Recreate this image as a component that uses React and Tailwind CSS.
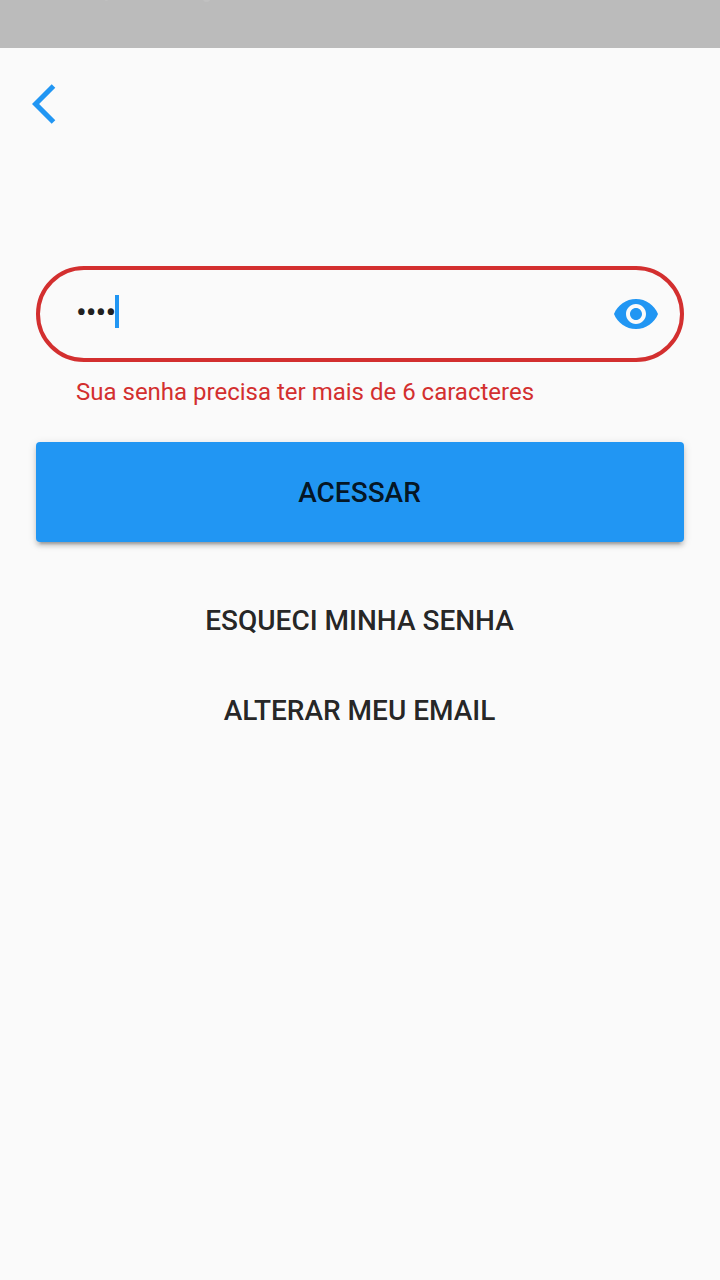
export default function App() {
  return (
    <div className="flex h-[1280px] w-[720px] flex-col bg-[#fafafa] font-['Roboto',sans-serif]">
      <div className="h-12 bg-[#bbbbbb]">
        <svg width="720" height="4" viewBox="0 0 720 4" fill="#c1c1c1" className="block">
          <circle cx="106.5" cy="-0.5" r="1.5" />
          <circle cx="206.5" cy="-2" r="4" />
        </svg>
      </div>
      <header className="flex h-28 items-center pl-8">
        <button aria-label="Voltar">
          <svg width="24" height="40" viewBox="0 0 24 40" fill="#2196f3" className="block">
            <path d="M19.7 0.3 23.3 3.8 7.1 20 23.3 36.2 19.7 39.7 0 20Z" />
          </svg>
        </button>
      </header>
      <main className="flex flex-col px-9 pt-[106px]">
        <div className="flex h-24 items-center justify-between rounded-full border-4 border-[#d32f2f] pr-5 pl-9">
          <div className="flex items-center pb-[5px]">
            <span className="w-[39px] text-[32px] leading-none tracking-[-1px] whitespace-nowrap text-[#212121]">••••</span>
            <span className="h-[33px] w-1 bg-[#2196f3]" />
          </div>
          <svg width="48" height="48" viewBox="0 0 24 24" fill="#2196f3">
            <path d="M12 4.5C7 4.5 2.73 7.61 1 12c1.73 4.39 6 7.5 11 7.5s9.27-3.11 11-7.5c-1.73-4.39-6-7.5-11-7.5zM12 17c-2.76 0-5-2.24-5-5s2.24-5 5-5 5 2.24 5 5-2.24 5-5 5zm0-8c-1.66 0-3 1.34-3 3s1.34 3 3 3 3-1.34 3-3-1.34-3-3-3z" />
          </svg>
        </div>
        <p className="mt-4 pl-10 text-2xl leading-7 text-[#d32f2f]">Sua senha precisa ter mais de 6 caracteres</p>
        <button className="mt-9 h-[100px] rounded bg-[#2196f3] pt-0.5 pr-px text-[28px] font-medium text-black/87 shadow-[0_6px_2px_-4px_rgba(0,0,0,0.2),0_4px_4px_rgba(0,0,0,0.14),0_2px_10px_rgba(0,0,0,0.12)]">ACESSAR</button>
        <button className="mt-[42px] h-[72px] pt-0.5 pr-px text-[28px] font-medium text-black/87">ESQUECI MINHA SENHA</button>
        <button className="mt-[18px] h-[72px] pt-0.5 pr-px text-[28px] font-medium text-black/87">ALTERAR MEU EMAIL</button>
      </main>
    </div>
  );
}
